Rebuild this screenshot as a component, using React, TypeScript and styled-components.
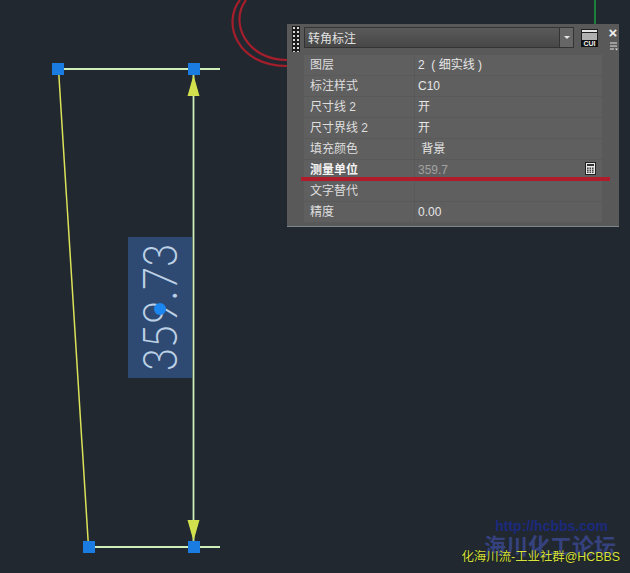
import React from "react";
import styled, { createGlobalStyle } from "styled-components";

const Global = createGlobalStyle`
  html, body { margin: 0; padding: 0; background: #212830; }
  #root { width: 630px; height: 573px; }
`;

const Canvas = styled.div`
  position: relative;
  width: 630px;
  height: 573px;
  overflow: hidden;
  background: #212830;
  font-family: "Liberation Sans", "Noto Sans CJK SC", sans-serif;
`;

const Drawing = styled.svg`
  position: absolute;
  left: 0;
  top: 0;
`;

const DimBox = styled.div`
  position: absolute;
  left: 128px;
  top: 237px;
  width: 64px;
  height: 141px;
  background: #2f4a72;
  display: flex;
  align-items: center;
  justify-content: center;
`;

const DimText = styled.span`
  display: block;
  transform: rotate(-90deg) scaleX(0.87);
  white-space: nowrap;
  font-family: "Lato", sans-serif;
  font-weight: 300;
  font-size: 47px;
  line-height: 1;
  color: #bcd0e6;
`;

const Grip = styled.div<{ $x: number; $y: number }>`
  position: absolute;
  left: ${(p) => p.$x}px;
  top: ${(p) => p.$y}px;
  width: 12px;
  height: 12px;
  background: #1a7ce0;
`;

const CenterGrip = styled.div`
  position: absolute;
  left: 154px;
  top: 303px;
  width: 12px;
  height: 12px;
  border-radius: 50%;
  background: #1b86f0;
`;

const Panel = styled.div`
  position: absolute;
  left: 287px;
  top: 24px;
  width: 332px;
  height: 203px;
  box-sizing: border-box;
  padding: 2px 0 0 5px;
  background: #595959;
  border-bottom: 1px solid #7d8790;
  display: flex;
  gap: 4px;
  color: #e2e2e2;
`;

const GripBar = styled.div`
  flex: none;
  width: 8px;
  height: 26px;
  background-image: radial-gradient(circle at 50% 50%, #d8d8d8 0 1.2px, #1c1c1c 1.4px);
  background-size: 4px 4px;
`;

const Body = styled.div`
  flex: none;
  width: 298px;
  display: flex;
  flex-direction: column;
`;

const TopRow = styled.div`
  display: flex;
  align-items: flex-start;
  gap: 7px;
  height: 29px;
`;

const Combo = styled.div`
  box-sizing: border-box;
  width: 270px;
  height: 21px;
  margin-top: 1px;
  display: flex;
  align-items: center;
  justify-content: space-between;
  border: 1px solid #333;
  background: linear-gradient(#5a5a5a, #474747);
  font-size: 12px;
  padding-left: 3px;
`;

const ComboArrow = styled.div`
  box-sizing: border-box;
  width: 14px;
  height: 19px;
  border-left: 1px solid #333;
  background: #666;
  display: flex;
  align-items: center;
  justify-content: center;
  &::after {
    content: "";
    border-left: 3px solid transparent;
    border-right: 3px solid transparent;
    border-top: 3px solid #e8e8e8;
  }
`;

const CuiBox = styled.div`
  margin-top: 3px;
  height: 18px;
  line-height: 0;
`;

const Side = styled.div`
  flex: none;
  width: 14px;
  display: flex;
  flex-direction: column;
  align-items: center;
`;

const CloseMark = styled.div`
  font-size: 15px;
  line-height: 14px;
  font-weight: 700;
  color: #f0f0f0;
  margin-bottom: 2px;
`;

const Rows = styled.div`
  display: flex;
  flex-direction: column;
`;

const Row = styled.div`
  display: grid;
  grid-template-columns: 110px 187px;
  grid-template-rows: 20px;
  column-gap: 1px;
  height: 20px;
  margin-bottom: 1px;
  font-size: 12px;
  line-height: 21px;
`;

const Label = styled.div<{ $bold?: boolean }>`
  background: #5f5f5f;
  padding-left: 6px;
  font-weight: ${(p) => (p.$bold ? 700 : 400)};
  color: ${(p) => (p.$bold ? "#f4f4f4" : "#dedede")};
`;

const Value = styled.div<{ $muted?: boolean }>`
  background: #5f5f5f;
  padding: 0 6px 0 3px;
  white-space: pre;
  display: flex;
  align-items: center;
  justify-content: space-between;
  color: ${(p) => (p.$muted ? "#a2a2a2" : "#e6e6e6")};
`;

const CalcWrap = styled.span`
  display: flex;
  margin-top: -3px;
`;

const RedLine = styled.div`
  position: absolute;
  left: 301px;
  top: 177px;
  width: 309px;
  height: 4px;
  background: #b01c2c;
`;

const WatermarkUrl = styled.div`
  position: absolute;
  right: 22px;
  top: 518px;
  font-size: 14px;
  font-weight: 700;
  color: #1c2a7c;
`;

const WatermarkTitle = styled.div`
  position: absolute;
  right: 14px;
  top: 534px;
  font-size: 22px;
  line-height: 26px;
  font-weight: 700;
  color: #36427e;
`;

const Credit = styled.div`
  position: absolute;
  right: 10px;
  top: 549px;
  font-size: 12.400px;
  line-height: 16px;
  color: #d8e23c;
  text-shadow: 0 0 1px #000;
  white-space: nowrap;
`;

const rows: { k: string; v: string; bold?: boolean; muted?: boolean; calc?: boolean }[] = [
  { k: "图层", v: "2  ( 细实线 )" },
  { k: "标注样式", v: "C10" },
  { k: "尺寸线 2", v: "开" },
  { k: "尺寸界线 2", v: "开" },
  { k: "填充颜色", v: " 背景" },
  { k: "测量单位", v: "359.7", bold: true, muted: true, calc: true },
  { k: "文字替代", v: "" },
  { k: "精度", v: "0.00" },
];

const Calc = () => (
  <svg width="11" height="13" viewBox="0 0 11 13">
    <rect x="0.5" y="0.5" width="10" height="12" fill="#e8e8e8" stroke="#222" />
    <rect x="2" y="2" width="7" height="2" fill="#333" />
    {[5.5, 7.5, 9.5].map((y) =>
      [2, 4.5, 7].map((x) => <rect key={`${x}-${y}`} x={x} y={y} width="1.6" height="1.4" fill="#333" />)
    )}
  </svg>
);

const CuiIcon = () => (
  <svg width="17" height="18" viewBox="0 0 17 18">
    <rect x="0.5" y="0.5" width="16" height="12" fill="#b0b0b0" stroke="#222" />
    <rect x="0.5" y="0.5" width="16" height="3" fill="#e6e6e6" stroke="#222" />
    <rect x="0" y="11" width="17" height="7" fill="#111" />
    <text x="8.500" y="17.300" textAnchor="middle" fontSize="7" fontWeight="700" fill="#f0f0f0" fontFamily="Liberation Sans, sans-serif">
      CUI
    </text>
  </svg>
);

const MenuLines = () => (
  <svg width="9" height="9" viewBox="0 0 9 9">
    <path d="M1 1h7M1 4h7M1 7h4" stroke="#e4e4e4" strokeWidth="1" />
    <path d="M6 6.5h3L7.500 8.500z" fill="#e4e4e4" />
  </svg>
);

export default function App() {
  return (
    <Canvas>
      <Global />
      <Drawing width="630" height="573" viewBox="0 0 630 573">
        <path d="M240 0 C 222 22, 236 66, 287 66" fill="none" stroke="#a51e2c" strokeWidth="2.2" />
        <path d="M246 0 C 229 22, 246 60, 287 60" fill="none" stroke="#a51e2c" strokeWidth="2.2" />
        <line x1="595" y1="0" x2="595" y2="24" stroke="#1e9a3c" strokeWidth="1.5" />
        <line x1="58" y1="69" x2="220" y2="69" stroke="#cfeeba" strokeWidth="1.8" />
        <line x1="88" y1="547" x2="220" y2="547" stroke="#cfeeba" strokeWidth="1.8" />
        <line x1="193.500" y1="75" x2="193.500" y2="541" stroke="#cdeeb8" strokeWidth="1.8" />
        <line x1="58.500" y1="69" x2="88.500" y2="547" stroke="#dce25a" strokeWidth="1.5" />
        <path d="M193.500 75 L199.500 96 H187.500 Z" fill="#d2e04e" />
        <path d="M193.500 541 L199.500 520 H187.500 Z" fill="#d2e04e" />
      </Drawing>
      <DimBox>
        <DimText>359.73</DimText>
      </DimBox>
      <CenterGrip />
      <Grip $x={52} $y={63} />
      <Grip $x={188} $y={63} />
      <Grip $x={83} $y={541} />
      <Grip $x={188} $y={541} />
      <Panel>
        <GripBar />
        <Body>
          <TopRow>
            <Combo>
              转角标注
              <ComboArrow />
            </Combo>
            <CuiBox>
              <CuiIcon />
            </CuiBox>
          </TopRow>
          <Rows>
            {rows.map((r) => (
              <Row key={r.k}>
                <Label $bold={r.bold}>{r.k}</Label>
                <Value $muted={r.muted}>
                  {r.v}
                  {r.calc && (
                    <CalcWrap>
                      <Calc />
                    </CalcWrap>
                  )}
                </Value>
              </Row>
            ))}
          </Rows>
        </Body>
        <Side>
          <CloseMark>×</CloseMark>
          <MenuLines />
        </Side>
      </Panel>
      <RedLine />
      <WatermarkUrl>http://hcbbs.com</WatermarkUrl>
      <WatermarkTitle>海川化工论坛</WatermarkTitle>
      <Credit>化海川流-工业社群@HCBBS</Credit>
    </Canvas>
  );
}
